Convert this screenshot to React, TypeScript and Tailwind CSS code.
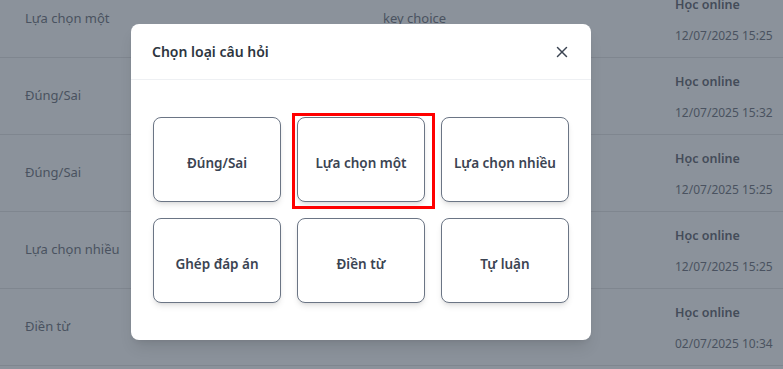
import { X } from "lucide-react";

const rows = [
  { type: "Lựa chọn một", answer: "key choice", date: "12/07/2025 15:25" },
  { type: "Đúng/Sai", answer: "", date: "12/07/2025 15:32" },
  { type: "Đúng/Sai", answer: "", date: "12/07/2025 15:25" },
  { type: "Lựa chọn nhiều", answer: "", date: "12/07/2025 15:25" },
  { type: "Điền từ", answer: "", date: "02/07/2025 10:34" },
];

const types = [
  "Đúng/Sai",
  "Lựa chọn một",
  "Lựa chọn nhiều",
  "Ghép đáp án",
  "Điền từ",
  "Tự luận",
];

export default function App() {
  return (
    <div
      className="relative h-[369px] w-[783px] overflow-hidden bg-[#8b929b]"
      style={{ fontFamily: '"Noto Sans", Inter, sans-serif' }}
    >
      {/* Table behind the backdrop */}
      <div className="-mt-[19px] flex flex-col">
        {rows.map((row, i) => (
          <div
            key={i}
            className="flex h-[77px] items-center border-b border-[#7f868f] text-[13px] text-[#4a5260]"
          >
            <div className="w-[358px] pl-[25px]">{row.type}</div>
            <div className="w-[292px] pl-[25px]">{row.answer}</div>
            <div className="flex flex-col gap-[12px] pl-[25px] pt-[3px] text-[12px]">
              <span className="text-[12.5px] font-semibold text-[#444c59]">Học online</span>
              <span>{row.date}</span>
            </div>
          </div>
        ))}
      </div>

      {/* Modal */}
      <div className="absolute left-[131px] top-[24px] w-[460px] rounded-lg bg-white shadow-lg">
        <div className="flex h-[56px] items-center justify-between border-b border-[#eef0f3] pl-[21px] pr-[20px]">
          <span className="text-[14px] font-semibold text-[#2d3540]">
            Chọn loại câu hỏi
          </span>
          <X size={18} strokeWidth={2} className="text-[#3b4452]" />
        </div>
        <div className="grid grid-cols-3 gap-4 px-[22px] py-[37px]">
          {types.map((t, i) => (
            <div key={t} className="relative">
              <button className="flex h-[85px] w-full items-center justify-center rounded-lg border border-[#6b7585] bg-white pt-[7px] text-[13.5px] font-semibold text-[#3b4452] shadow-md">
                {t}
              </button>
              {i === 1 && (
                <div className="pointer-events-none absolute -left-[5px] -top-[4px] h-[96px] w-[143px] border-[3px] border-[#ff0000]" />
              )}
            </div>
          ))}
        </div>
      </div>
    </div>
  );
}
